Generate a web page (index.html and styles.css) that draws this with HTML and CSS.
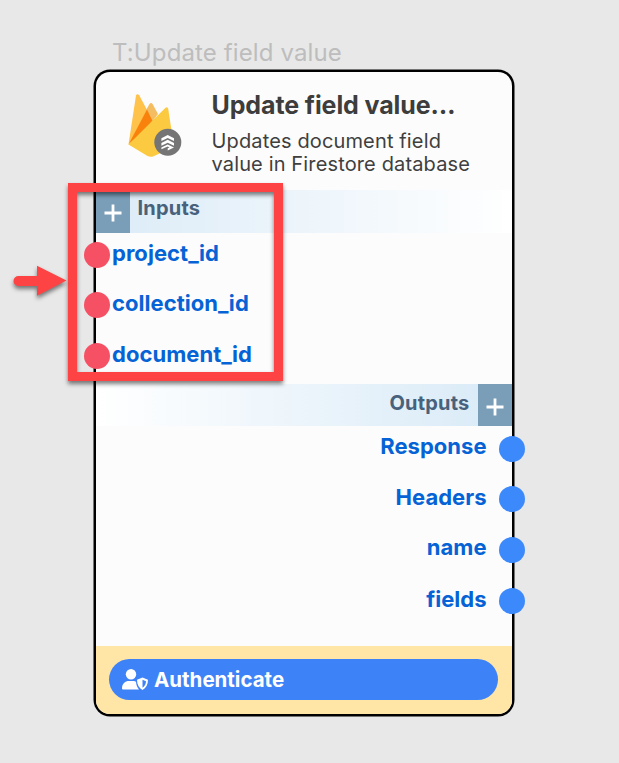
FILE: index.html
```html
<!DOCTYPE html>
<html lang="en">
<head>
<meta charset="utf-8">
<title>Update field value</title>
<link rel="stylesheet" href="styles.css">
</head>
<body>
<div class="canvas">
  <div class="node-label"><span>T:Update field value</span></div>
  <section class="node">
    <header class="node-head">
      <svg class="logo" viewBox="0 0 56 66" aria-hidden="true">
        <path fill="#ffc24a" d="M.5 51.5 8 2.5Q9 .3 11.2 2.2L19 17 20 26Z"/>
        <path fill="#f4bd62" d="M17.5 18 21.5 11Q23 9 24.6 11L30 21 24 29Z"/>
        <path fill="#f8820c" d="M.5 51.5 19 16.5 24.5 28 14 40Z"/>
        <path fill="#fbca40" d="M.5 51.5 37.5 14.8Q39.7 13.2 40.2 15.8L46 54 25.5 63.2Q22.5 64.5 19.5 63Z"/>
        <circle cx="39.8" cy="49.3" r="13.5" fill="#757575"/>
        <path fill="#fff" d="M33.4 48V45.2L39.7 42 46 45.2V48L39.7 44.9ZM33.4 52.7V50L39.7 46.8 46 50V52.7L39.7 49.7ZM39.7 51.6 46 54.6 39.7 57.6V55.3L41.5 54.4 39.7 53.5 33.4 56.3V54.5Z"/>
      </svg>
      <div class="intro">
        <h1><span>Update field value…</span></h1>
        <p><span>Updates document field</span><br><span>value in Firestore database</span></p>
      </div>
    </header>
    <div class="bar bar-in"><span class="add">
      <svg viewBox="0 0 18 18"><path d="M9 .5V17.5M.5 9H17.5"/></svg></span><b>Inputs</b></div>
    <ul class="ports ports-in">
      <li><i class="dot"></i><span>project_id</span></li>
      <li><i class="dot"></i><span>collection_id</span></li>
      <li><i class="dot"></i><span>document_id</span></li>
    </ul>
    <div class="bar bar-out"><b>Outputs</b><span class="add">
      <svg viewBox="0 0 18 18"><path d="M9 .5V17.5M.5 9H17.5"/></svg></span></div>
    <ul class="ports ports-out">
      <li><span>Response</span><i class="dot"></i></li>
      <li><span>Headers</span><i class="dot"></i></li>
      <li><span>name</span><i class="dot"></i></li>
      <li><span>fields</span><i class="dot"></i></li>
    </ul>
    <footer class="node-foot">
      <button class="auth" type="button">
        <svg viewBox="0 0 26 21" aria-hidden="true">
          <circle cx="9" cy="5.2" r="5.2"/>
          <path d="M0 19.5C0 14.5 3.2 12 7 12H11.2C12.5 12 13.3 12.3 14 12.8 14.2 16 15.2 18.5 17 20.5H1Q0 20.5 0 19.5Z"/>
          <path fill-rule="evenodd" d="M20.5 8.5 26 10.8C26 15.8 24 19.2 20.5 21 17 19.2 15 15.8 15 10.8ZM20.5 10.7V18.7C22.7 17.3 23.9 15 24 12.2Z"/>
        </svg>
        <span>Authenticate</span>
      </button>
    </footer>
  </section>
  <div class="highlight"></div>
  <svg class="arrow" viewBox="0 0 60 40" aria-hidden="true"><path d="M6.5 14H25V3.7L54.5 18.5 25 33.7V24H6.5A5 5 0 0 1 6.5 14Z"/></svg>
</div>
</body>
</html>
```
FILE: styles.css
```css
* { box-sizing: border-box; }
body {
  margin: 0;
  background: #e8e8e8;
  font-family: Inter, "Liberation Sans", sans-serif;
  color: #3c4043;
}
.canvas {
  position: relative;
  width: 619px;
  height: 763px;
  overflow: hidden;
  padding: 38px 0 0 96px;
}
.node-label {
  height: 34px;
  padding-left: 16px;
  font-size: 24px;
  line-height: 29px;
  letter-spacing: .12px;
  color: #bdbdbd;
  white-space: nowrap;
}
.node {
  display: flex;
  flex-direction: column;
  width: 415.5px;
  height: 641.5px;
  border-radius: 14px;
  background: #fcfcfc;
  box-shadow: 0 0 0 2.5px #000;
}
.node-head {
  display: flex;
  height: 118px;
  padding: 21px 0 0 32px;
  white-space: nowrap;
}
.logo { width: 56px; height: 66px; flex: none; }
.intro { padding-left: 27.5px; }
h1 {
  margin: -3px 0 0;
  font-size: 25px;
  line-height: 31px;
  font-weight: 700;
  letter-spacing: -.1px;
  color: #3d3d3d;
}
p {
  margin: 9px 0 0;
  font-size: 20px;
  line-height: 23px;
  letter-spacing: .14px;
  color: #3f3f3f;
}
.bar {
  display: flex;
  flex: none;
  font-size: 20px;
  line-height: 24px;
  letter-spacing: .2px;
  color: #48627c;
}
.bar b { font-weight: 700; }
.bar-in { height: 43px; background: linear-gradient(90deg, #dbebf7, #fff); }
.bar-in b { padding: 6px 0 0 8px; }
.bar-out {
  height: 42px;
  justify-content: flex-end;
  background: linear-gradient(270deg, #d8eaf7, #fff);
}
.bar-out b { padding: 7px 8.5px 0 0; }
.add {
  display: flex;
  width: 33.5px;
  padding: 3px 0 0;
  align-items: center;
  justify-content: center;
  background: #7a9db8;
}
.add svg { width: 18px; height: 18px; stroke: #fff; stroke-width: 2.8; }
.ports {
  margin: 0;
  padding: 7px 0 0;
  list-style: none;
  font-size: 22px;
  line-height: 27px;
  letter-spacing: .04px;
  font-weight: 700;
  color: #0563d6;
}
.ports li { display: flex; height: 51px; }
.dot { width: 26px; height: 26px; border-radius: 50%; flex: none; }
.ports-in { height: 151px; }
.ports-in li { margin-left: -12.4px; }
.ports-in li:first-child { height: 50px; }
.ports-in .dot { margin: 2px 2.4px 0 0; background: #f55063; }
.ports-out { height: 220px; }
.ports-out li { justify-content: flex-end; margin-right: -13.8px; }
.ports-out li:nth-child(2) { height: 50px; }
.ports-out .dot { margin: 3px 0 0 12.7px; background: #3c89fb; }
.ports-out li:nth-child(2) .dot { margin-top: 2px; }
.ports-out li:nth-child(4) span { margin-top: 1px; }
.node-foot {
  flex: 1;
  padding: 13px 13.5px 0 13px;
  background: #ffe6a7;
  border-radius: 0 0 14px 14px;
}
.auth {
  display: flex;
  align-items: center;
  width: 389px;
  height: 41px;
  padding: 0 0 0 13px;
  border: 0;
  border-radius: 21px;
  background: #3e82f7;
  color: #fff;
  font: 700 20.5px/24px Inter, "Liberation Sans", sans-serif;
}
.auth svg { width: 26px; height: 21px; margin-right: 6px; fill: #fff; }
.highlight {
  position: absolute;
  left: 68px;
  top: 183px;
  width: 215px;
  height: 198px;
  border: 9px solid #fd4343;
  filter: drop-shadow(0 3px 2px rgba(0, 0, 0, .5));
}
.arrow {
  position: absolute;
  left: 12px;
  top: 262px;
  width: 60px;
  height: 40px;
  fill: #fd4343;
  filter: drop-shadow(0 3px 2px rgba(0, 0, 0, .5));
}
```
